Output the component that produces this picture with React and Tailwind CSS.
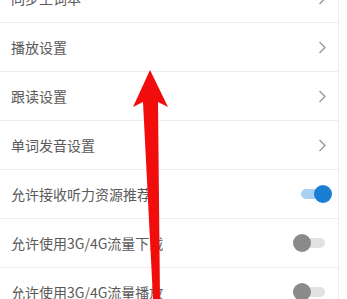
import React from "react";

const ROWS = [
  { label: "同步生词本", type: "link" },
  { label: "播放设置", type: "link" },
  { label: "跟读设置", type: "link" },
  { label: "单词发音设置", type: "link" },
  { label: "允许接收听力资源推荐", type: "switch", on: true },
  { label: "允许使用3G/4G流量下载", type: "switch", on: false },
  { label: "允许使用3G/4G流量播放", type: "switch", on: false },
];

function Chevron() {
  return (
    <svg width="9" height="13" viewBox="0 0 9 13" className="mr-[11px]">
      <path d="M1.5 1 L7 6.5 L1.5 12" fill="none" stroke="#9a9a9a" strokeWidth="1.4" />
    </svg>
  );
}

function Switch({ on }) {
  return (
    <div className="relative w-[40px] h-[18px] mr-[6px] flex items-center">
      <div className={`ml-[9px] w-[24px] h-[10px] rounded-full ${on ? "bg-[#a9d2f2]" : "bg-[#e2e2e2]"}`} />
      <div
        className={`absolute top-0 w-[18px] h-[18px] rounded-full ${
          on ? "right-0 bg-[#1a7fd4]" : "left-[1px] bg-[#8a8a8a]"
        }`}
      />
    </div>
  );
}

export default function App() {
  return (
    <div
      className="relative w-[347px] h-[299px] overflow-hidden bg-white"
      style={{ fontFamily: '"Noto Sans CJK SC", "Noto Sans", sans-serif' }}
    >
      <div className="flex">
        <div className="w-[339px] border-r border-[#eeeeee] -mt-[26px]">
          {ROWS.map((row) => (
            <div
              key={row.label}
              className="h-[49px] flex items-center justify-between border-b border-[#ededed]"
            >
              <span className="pl-[11px] text-[14px] text-[#5a5a5a]">{row.label}</span>
              {row.type === "link" ? <Chevron /> : <Switch on={row.on} />}
            </div>
          ))}
        </div>
        <div className="flex-1" />
      </div>

      <svg className="absolute inset-0 pointer-events-none" width="347" height="299" viewBox="0 0 347 299">
        <polygon
          points="150,70 168,107 158,102 160,299 153,299 143,102 133,107"
          fill="#f20d0d"
        />
      </svg>
    </div>
  );
}
